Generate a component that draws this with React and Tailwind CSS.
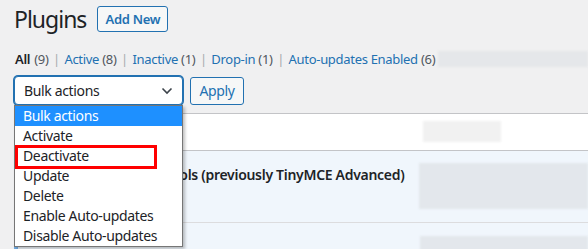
import React from "react";

const font = { fontFamily: '"Noto Sans", "Open Sans", sans-serif' };

export default function App() {
  return (
    <div
      className="relative w-[588px] h-[249px] overflow-hidden bg-[#f0f0f1] text-[#1d2327]"
      style={font}
    >
      {/* Header */}
      <div className="flex items-center h-[26px] mt-[6px] pl-[14px]">
        <h1 className="text-[23px] leading-[29px] font-normal tracking-[-1px] text-[#1d2327]">Plugins</h1>
        <button className="ml-[11px] h-[26px] w-[71px] border border-[#2271b1] rounded-[3px] bg-[#f6f7f7] text-[13px] font-semibold tracking-[-0.3px] text-[#2271b1] leading-none">
          Add New
        </button>
      </div>

      {/* Filters */}
      <div className="flex items-center h-[16px] mt-[19px] pl-[15px] text-[13px] leading-[16px] tracking-[-0.3px] whitespace-nowrap">
        <span className="font-semibold text-[#1d2327]">All</span>
        <span className="text-[#50575e] ml-[4px]">(9)</span>
        <span className="text-[#a7aaad] mx-[4.5px]">|</span>
        <span className="text-[#2271b1]">Active <span className="text-[#50575e]">(8)</span></span>
        <span className="text-[#a7aaad] mx-[4.5px]">|</span>
        <span className="text-[#2271b1]">Inactive <span className="text-[#50575e]">(1)</span></span>
        <span className="text-[#a7aaad] mx-[4.5px]">|</span>
        <span className="text-[#2271b1]">Drop-in <span className="text-[#50575e]">(1)</span></span>
        <span className="text-[#a7aaad] mx-[4.5px]">|</span>
        <span className="text-[#2271b1]">Auto-updates Enabled <span className="text-[#50575e]">(6)</span></span>
        <div className="ml-[3px] h-[16px] w-[170px] bg-[#e5e7ea] blur-[1px]" />
      </div>

      {/* Bulk actions */}
      <div className="flex items-start mt-[9px] pl-[14px]">
        <div className="flex items-center justify-between h-[29px] w-[169px] border border-[#2271b1] rounded-[4px] bg-white pl-[9px] pr-[9px] shadow-[0_0_0_1px_#2271b1] text-[14px] tracking-[-0.35px]">
          <span>Bulk actions</span>
          <svg width="12" height="8" viewBox="0 0 12 8" fill="none">
            <path d="M1.5 1.5 L6 6 L10.5 1.5" stroke="#3c434a" strokeWidth="1.6" />
          </svg>
        </div>
        <button className="ml-[7px] mt-[1px] h-[28px] w-[54px] border border-[#2271b1] rounded-[3px] bg-[#f6f7f7] text-[14px] tracking-[-0.35px] text-[#2271b1] leading-none">
          Apply
        </button>
      </div>

      {/* Table */}
      <div className="mt-[8px] ml-[14px] border-t border-[#c3c4c7]">
        <div className="flex h-[37px] bg-white border-b border-[#c3c4c7]">
          <div className="w-[409px]" />
          <div className="mt-[7px] h-[21px] w-[78px] bg-[#f1f1f1] blur-[1px]" />
        </div>
        <div className="flex h-[72px] bg-[#f0f6fc] border-b border-[#dcdcde] shadow-[inset_4px_0_0_#72aee6]">
          <div className="w-[405px] pl-[40px] pt-[11px]">
            <span className="text-[14px] leading-[20px] font-semibold tracking-[-0.3px] text-[#1d2327] whitespace-nowrap">
              Advanced Editor Tools (previously TinyMCE Advanced)
            </span>
          </div>
          <div className="mt-[12px] h-[46px] flex-1 bg-[#e3e7ec] blur-[1px]" />
        </div>
        <div className="flex h-[40px] bg-[#f0f6fc] shadow-[inset_4px_0_0_#72aee6]">
          <div className="w-[406px]" />
          <div className="mt-[13px] h-[30px] flex-1 bg-[#e3e7ec] blur-[1px]" />
        </div>
      </div>

      {/* Open dropdown */}
      <div className="absolute left-[14px] top-[105px] w-[169px] h-[142px] border border-[#767676] bg-white shadow-[2px_2px_3px_rgba(0,0,0,0.25)] text-[14px] leading-[20px] tracking-[-0.35px]">
        <div className="h-[20px] pl-[8px] bg-[#1e90ff] text-white">Bulk actions</div>
        <div className="h-[20px] pl-[8px]">Activate</div>
        <div className="h-[20px] pl-[8px]">Deactivate</div>
        <div className="h-[20px] pl-[8px]">Update</div>
        <div className="h-[20px] pl-[8px]">Delete</div>
        <div className="h-[20px] pl-[8px]">Enable Auto-updates</div>
        <div className="h-[20px] pl-[8px]">Disable Auto-updates</div>
      </div>

      {/* Highlight box */}
      <div className="absolute left-[15px] top-[145px] w-[142px] h-[24px] border-[3px] border-[#f00]" />
    </div>
  );
}
